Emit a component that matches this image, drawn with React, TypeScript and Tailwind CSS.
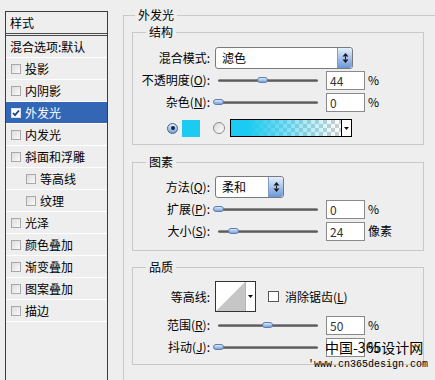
import React from "react";

const Chk = ({ checked = false }: { checked?: boolean }) => (
  <div
    className={
      "w-[10px] h-[10px] border flex items-center justify-center shrink-0 " +
      (checked ? "border-[#d8e2f2] bg-white" : "border-[#a8a8a8] bg-gradient-to-br from-[#dcdcdc] to-[#fafafa]")
    }
  >
    {checked && (
      <svg width="8" height="8" viewBox="0 0 8 8">
        <path d="M1 4 L3 6.2 L7 1.5" stroke="#1f3f8a" strokeWidth="1.8" fill="none" />
      </svg>
    )}
  </div>
);

const Row = ({ label, indent = false, selected = false }: { label: string; indent?: boolean; selected?: boolean }) => (
  <div
    className={
      "h-[22px] flex items-center border-b border-white " +
      (selected ? "bg-[#3366b5] text-white" : "text-black")
    }
  >
    <div className={indent ? "ml-[20px]" : "ml-[5px]"}>
      <Chk checked={selected} />
    </div>
    <span className="ml-[4px] text-[12px] leading-none">{label}</span>
  </div>
);

const Group = ({ title, h, mt, children }: { title: string; h: string; mt: string; children: React.ReactNode }) => (
  <div className={"relative ml-[8px] w-[292px] border border-[#c8c8c8] " + h + " " + mt}>
    <div className="absolute -top-[9px] left-[13px] px-[3px] bg-[#eeeeee] text-[12px] leading-[16px]">{title}</div>
    {children}
  </div>
);

const Label = ({ children }: { children: React.ReactNode }) => (
  <div className="w-[77px] text-right text-[12px] leading-none whitespace-nowrap">{children}</div>
);

const Slider = ({ pos }: { pos: number }) => (
  <div className="relative ml-[8px] w-[100px] h-[8px] flex items-center">
    <div className="w-full h-[3px] rounded-full bg-gradient-to-b from-[#a5a5a5] via-[#5c5c5c] to-[#8a8a8a]" />
    <div
      className="absolute top-[1px] w-[11px] h-[6px] rounded-full border border-[#5b7fb5] bg-gradient-to-b from-[#dce8f8] to-[#7da2d6]"
      style={{ left: `${pos - 5}px` }}
    />
  </div>
);

const Num = ({ v }: { v: string }) => (
  <div className="ml-[8px] w-[39px] h-[19px] border border-[#8a8a8a] bg-white text-[12px] leading-[17px] pl-[3px] text-[#333]">
    {v}
  </div>
);

const Unit = ({ u }: { u: string }) => <span className="ml-[3px] text-[12px] leading-none">{u}</span>;

const Stepper = () => (
  <div className="w-[15px] h-full rounded-r-[3px] border-l border-[#7e9cc8] bg-gradient-to-b from-[#e6effb] via-[#a7c4ec] to-[#6a97d8] flex items-center justify-center">
    <svg width="7" height="12" viewBox="0 0 7 12">
      <path d="M3.5 1 L6.5 4.5 H0.5 Z M3.5 11 L6.5 7.5 H0.5 Z" fill="#1a1a1a" />
      <rect x="3" y="4.5" width="1" height="3" fill="#1a1a1a" />
    </svg>
  </div>
);

const Select = ({ text, w }: { text: string; w: string }) => (
  <div className={"ml-[5px] h-[22px] border border-[#7a7a7a] rounded-[3px] bg-white flex items-center overflow-hidden " + w}>
    <span className="flex-1 pl-[6px] text-[12px] leading-none">{text}</span>
    <Stepper />
  </div>
);

const U = ({ c }: { c: string }) => <span className="underline">{c}</span>;

const DownArrow = () => (
  <svg width="5" height="3" viewBox="0 0 5 3">
    <path d="M0 0 H5 L2.5 3 Z" fill="#111" />
  </svg>
);

export default function App() {
  return (
    <div className="w-[435px] h-[380px] bg-[#eeeeee] overflow-hidden relative flex font-['Noto_Sans_CJK_SC','Noto_Sans',sans-serif] text-black">
      {/* Left list */}
      <div className="ml-[5px] mt-[11px] w-[103px] h-[400px] border border-[#3c3c3c] shrink-0">
        <div className="h-[24px] border-b-[3px] border-double border-[#4a4a4a] flex items-center pl-[4px] text-[12px] leading-none">
          样式
        </div>
        <div className="h-[22px] flex items-center border-b border-white pl-[4px] text-[12px] leading-none">
          混合选项:默认
        </div>
        <Row label="投影" />
        <Row label="内阴影" />
        <Row label="外发光" selected />
        <Row label="内发光" />
        <Row label="斜面和浮雕" />
        <Row label="等高线" indent />
        <Row label="纹理" indent />
        <Row label="光泽" />
        <Row label="颜色叠加" />
        <Row label="渐变叠加" />
        <Row label="图案叠加" />
        <Row label="描边" />
      </div>

      {/* Right */}
      <div className="ml-[15px] shrink-0">
        <div className="relative mt-[15px] w-[330px] h-[400px] border border-[#c8c8c8]">
          <div className="absolute -top-[9px] left-[11px] px-[3px] bg-[#eeeeee] text-[12px] leading-[16px]">外发光</div>

          <Group title="结构" h="h-[113px]" mt="mt-[16px]">
            <div className="pt-[14px] flex flex-col">
              <div className="h-[22px] flex items-center">
                <Label>混合模式:</Label>
                <Select text="滤色" w="w-[138px]" />
              </div>
              <div className="h-[22px] flex items-center">
                <Label>
                  不透明度(<U c="O" />):
                </Label>
                <Slider pos={44} />
                <Num v="44" />
                <Unit u="%" />
              </div>
              <div className="h-[22px] flex items-center">
                <Label>
                  杂色(<U c="N" />):
                </Label>
                <Slider pos={0} />
                <Num v="0" />
                <Unit u="%" />
              </div>
              <div className="mt-[4px] h-[22px] flex items-center">
                <div className="ml-[34px] w-[11px] h-[11px] rounded-full border border-[#3d5f93] bg-gradient-to-b from-[#e4eefa] to-[#7ba2d4] flex items-center justify-center">
                  <div className="w-[4px] h-[4px] rounded-full bg-[#14254a]" />
                </div>
                <div className="ml-[4px] w-[18px] h-[17px] bg-[#1ccbf2]" />
                <div className="ml-[13px] w-[12px] h-[12px] rounded-full border border-[#8a8a8a] bg-gradient-to-br from-[#d8d8d8] to-white" />
                <div className="ml-[5px] w-[122px] h-[18px] border border-black flex bg-white">
                  <div className="flex-1 bg-[linear-gradient(to_right,#1ccbf2_0%,#1ccbf2_15%,#1ccbf200_100%),repeating-conic-gradient(#cfcfcf_0_25%,#ffffff_0_50%)] [background-size:100%_100%,8px_8px]" />
                  <div className="w-[10px] border-l border-black flex items-center justify-center bg-white">
                    <DownArrow />
                  </div>
                </div>
              </div>
            </div>
          </Group>

          <Group title="图素" h="h-[89px]" mt="mt-[17px]">
            <div className="pt-[13px] flex flex-col">
              <div className="h-[22px] flex items-center">
                <Label>
                  方法(<U c="Q" />):
                </Label>
                <Select text="柔和" w="w-[69px]" />
              </div>
              <div className="h-[22px] flex items-center">
                <Label>
                  扩展(<U c="P" />):
                </Label>
                <Slider pos={0} />
                <Num v="0" />
                <Unit u="%" />
              </div>
              <div className="h-[22px] flex items-center">
                <Label>
                  大小(<U c="S" />):
                </Label>
                <Slider pos={15} />
                <Num v="24" />
                <Unit u="像素" />
              </div>
            </div>
          </Group>

          <Group title="品质" h="h-[98px]" mt="mt-[16px]">
            <div className="pt-[13px] flex flex-col">
              <div className="h-[31px] flex items-center">
                <Label>等高线:</Label>
                <div className="ml-[5px] w-[41px] h-[31px] border border-[#333] bg-white flex">
                  <svg width="29" height="29" viewBox="0 0 29 29">
                    <polygon points="0,29 29,0 29,29" fill="#c6c6c6" />
                  </svg>
                  <div className="flex-1 border-l border-[#b5b5b5] flex items-center justify-center">
                    <DownArrow />
                  </div>
                </div>
                <div className="ml-[12px] w-[11px] h-[11px] border border-[#555] bg-white" />
                <span className="ml-[6px] text-[12px] leading-none">
                  消除锯齿(<U c="L" />)
                </span>
              </div>
              <div className="mt-[2px] h-[22px] flex items-center">
                <Label>
                  范围(<U c="R" />):
                </Label>
                <Slider pos={49} />
                <Num v="50" />
                <Unit u="%" />
              </div>
              <div className="h-[22px] flex items-center">
                <Label>
                  抖动(<U c="J" />):
                </Label>
                <Slider pos={0} />
                <Num v="" />
                <Unit u="%" />
              </div>
            </div>
          </Group>
        </div>
      </div>

      {/* Watermark */}
      <div className="absolute left-[325px] top-[339px] text-[14px] leading-[16px] text-black whitespace-nowrap">
        中国-365设计网
      </div>
      <div className="absolute left-[308px] top-[359px] text-[10px] leading-[12px] font-['Liberation_Mono',monospace] text-black whitespace-nowrap">
        'www.cn365design.com
      </div>
    </div>
  );
}
